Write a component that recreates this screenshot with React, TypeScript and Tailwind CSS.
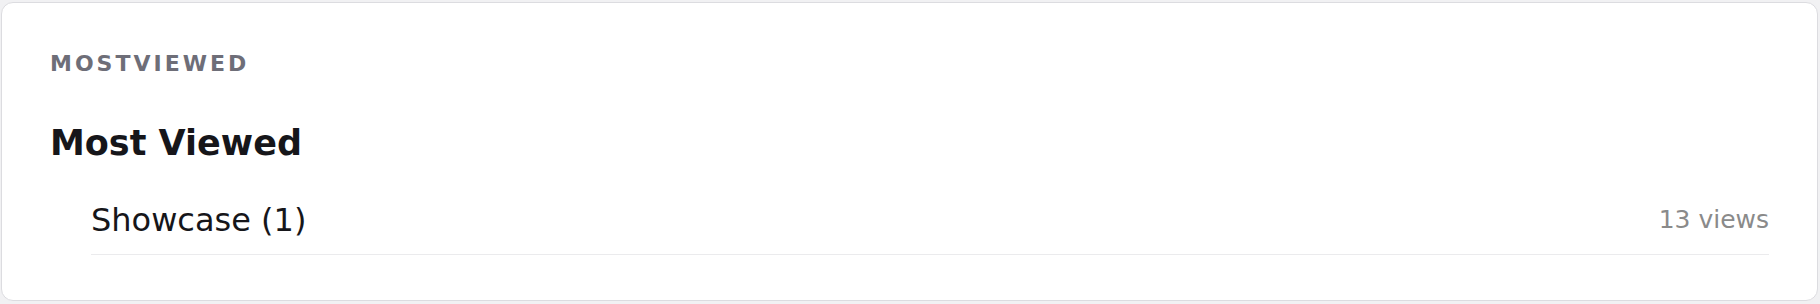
export default function App() {
  const items = [{ name: 'Showcase (1)', views: 13 }]

  return (
    <main className="w-[1820px] h-[304px] bg-[#f1f1f3] px-px pt-[2px] font-['DejaVu_Sans',sans-serif]">
      <section className="w-[1817px] h-[299px] rounded-[12px] border border-[#dcdce0] bg-white pl-[48px] pr-[48px] pt-[46px]">
        <p className="text-[22px] leading-[30px] font-bold tracking-[3px] text-[#6e6e78]">MOSTVIEWED</p>
        <h2 className="mt-[42px] text-[35px] leading-[44px] font-bold text-[#16161a]">Most Viewed</h2>
        <ul className="mt-[25px] pl-[41px]">
          {items.map((item) => (
            <li
              key={item.name}
              className="flex items-center justify-between pt-[6px] pb-[10px] border-b border-[#ebebed]"
            >
              <span className="text-[32px] leading-[48px] text-[#16161a]">{item.name}</span>
              <span className="text-[25px] leading-[38px] text-[#8a8a8a]">{item.views} views</span>
            </li>
          ))}
        </ul>
      </section>
    </main>
  )
}
